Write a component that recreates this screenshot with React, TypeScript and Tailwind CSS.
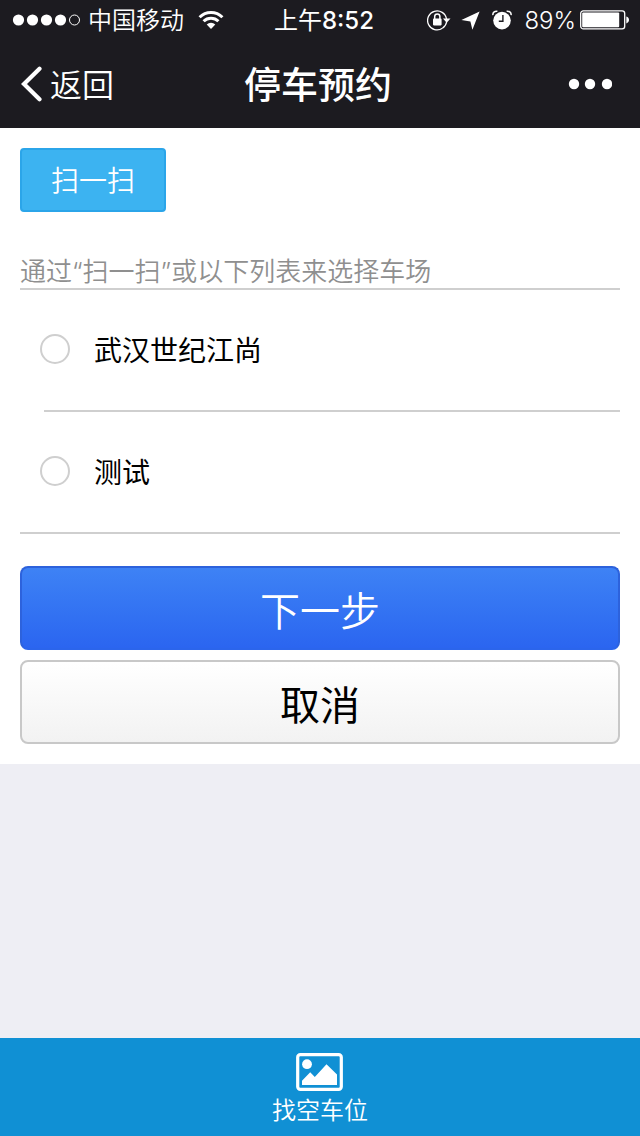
import { useState } from 'react';

interface ParkingLot {
  id: string;
  name: string;
}

const lots: ParkingLot[] = [
  { id: 'jiangshang', name: '武汉世纪江尚' },
  { id: 'test', name: '测试' },
];

function SignalDots() {
  return (
    <svg width="68" height="12" viewBox="0 0 68 12" fill="#fff">
      <circle cx="6.5" cy="6" r="5.6" />
      <circle cx="20.5" cy="6" r="5.6" />
      <circle cx="34.5" cy="6" r="5.6" />
      <circle cx="48.5" cy="6" r="5.6" />
      <circle cx="62.5" cy="6" r="5" fill="none" stroke="#fff" />
    </svg>
  );
}

function WifiIcon() {
  return (
    <svg width="26" height="20" viewBox="0 0 26 20" fill="none" stroke="#fff" strokeWidth="3">
      <path d="M1.6 7.2a16.2 16.2 0 0 1 22.8 0" />
      <path d="M5.6 11.3a10.5 10.5 0 0 1 14.8 0" />
      <path d="M13 19l-4.3-4.6a6.2 6.2 0 0 1 8.6 0z" fill="#fff" stroke="none" />
    </svg>
  );
}

function RotationLockIcon() {
  return (
    <svg width="24" height="22" viewBox="0 0 24 22" fill="none" stroke="#fff">
      <path d="M15.4 19.3A9.5 9.5 0 1 1 19.5 10" strokeWidth="1.3" />
      <path d="M15.9 9.6h7.6l-3.8 4.2z" fill="#fff" stroke="none" />
      <path d="M19.6 13a9.5 9.5 0 0 1-4.2 6.3" strokeWidth="1.3" />
      <rect x="6" y="9.6" width="8.6" height="6.8" rx="0.8" fill="#fff" stroke="none" />
      <path d="M7.7 10V7.6a2.6 2.6 0 0 1 5.2 0V10" strokeWidth="1.5" />
    </svg>
  );
}

function LocationIcon() {
  return (
    <svg width="19" height="19" viewBox="0 0 19 19" fill="#fff">
      <path d="M18.6 0.4L11.4 18.8 9.4 10.4 0.4 9z" />
    </svg>
  );
}

function AlarmIcon() {
  return (
    <svg width="20" height="20" viewBox="0 0 20 20" fill="none" stroke="#fff">
      <circle cx="10" cy="10.6" r="8.8" fill="#fff" stroke="none" />
      <path d="M0.9 5.2C0.6 2.6 2.4 1 5.4 1.3M19.1 5.2C19.4 2.6 17.6 1 14.6 1.3" strokeWidth="1.5" />
      <path d="M10.9 5v6.2H6.8" stroke="#1c1b20" strokeWidth="1.4" />
    </svg>
  );
}

function BatteryIcon() {
  return (
    <svg width="50" height="20" viewBox="0 0 50 20" fill="#fff">
      <rect x="0.7" y="0.9" width="44" height="18" rx="2.6" fill="none" stroke="#fff" strokeWidth="1.3" />
      <rect x="2.2" y="2.6" width="37" height="14.6" rx="1" />
      <path d="M46.3 6.6c3.6 1 3.6 5.8 0 6.8z" />
    </svg>
  );
}

function PictureIcon() {
  return (
    <svg width="48" height="38" viewBox="0 0 48 38" fill="#fff">
      <rect x="1.7" y="1.7" width="43.6" height="34.6" rx="2.6" fill="none" stroke="#fff" strokeWidth="3.2" />
      <circle cx="11" cy="11.2" r="4.9" />
      <path d="M6 32V27.8L14.2 19.2 18.8 24 30.5 11.2 41 21.6V32z" />
    </svg>
  );
}

function StatusBar() {
  return (
    <div className="grid h-10 grid-cols-[1fr_auto_1fr] items-center pr-2.5 pl-3 text-2xl">
      <div className="flex items-center gap-2">
        <SignalDots />
        <span className="pt-0.5 font-[350]">中国移动</span>
        <span className="ml-1.5"><WifiIcon /></span>
      </div>
      <time className="pt-0.5 pl-1.5">
        上午<span className="font-medium">8:52</span>
      </time>
      <div className="flex items-center justify-end gap-3">
        <span className="flex items-center gap-2.5">
          <RotationLockIcon />
          <LocationIcon />
        </span>
        <AlarmIcon />
        <span className="flex items-center gap-1 font-light">
          <span className="pt-0.5">89%</span>
          <BatteryIcon />
        </span>
      </div>
    </div>
  );
}

export default function App() {
  const [selected, setSelected] = useState<string | null>(null);

  return (
    <div
      lang="zh-CN"
      className="flex min-h-screen flex-col bg-[#eeeef4] font-['Inter','Noto_Sans_CJK_SC',sans-serif] text-black"
    >
      <header className="bg-[#1c1b20] text-white">
        <StatusBar />
        <nav className="grid h-22 grid-cols-[1fr_auto_1fr] items-center px-5">
          <button type="button" className="flex items-center gap-2 justify-self-start text-[32px] font-[350]">
            <svg width="22" height="36" viewBox="0 0 22 36" fill="none" stroke="#fff" strokeWidth="4.2" strokeLinecap="round">
              <path d="M19.5 2.8L4 18l15.5 15.2" />
            </svg>
            <span className="pt-1">返回</span>
          </button>
          <h1 className="pt-1 pr-1 text-[37px] font-medium">停车预约</h1>
          <button type="button" aria-label="更多" className="mr-2 justify-self-end">
            <svg width="44" height="12" viewBox="0 0 44 12" fill="#fff">
              <circle cx="6" cy="6" r="5.2" />
              <circle cx="22" cy="6" r="5.2" />
              <circle cx="39" cy="6" r="5.2" />
            </svg>
          </button>
        </nav>
      </header>

      <main className="bg-white p-5">
        <button
          type="button"
          className="h-16 rounded border-2 border-[#2ba5e9] bg-[#3cb3f1] px-[29px] pt-0.5 text-[28px] font-[350] text-white"
        >
          扫一扫
        </button>

        <fieldset className="mt-9">
          <legend className="w-full border-b-2 border-[#cfcfcf] pt-2 text-[26px] leading-8 font-[350] text-[#8f8f8f]">
            通过“扫一扫”或以下列表来选择车场
          </legend>
          <div className="border-b-2 border-[#cfcfcf]">
            {lots.map((lot, i) => (
              <div key={lot.id}>
                {i > 0 && <hr className="ml-6 border-t-2 border-[#cfcfcf]" />}
                <label className="flex h-30 items-center gap-6 pb-0.5 pl-5 text-[28px]">
                  <input
                    type="radio"
                    name="lot"
                    value={lot.id}
                    checked={selected === lot.id}
                    onChange={() => setSelected(lot.id)}
                    className="size-[30px] appearance-none rounded-full border-2 border-[#cfcfcf] bg-white checked:border-8 checked:border-[#2f66ee]"
                  />
                  <span className="pt-1">{lot.name}</span>
                </label>
              </div>
            ))}
          </div>
        </fieldset>

        <div className="mt-8 flex flex-col gap-2.5 text-[40px]">
          <button
            type="button"
            className="h-21 rounded-lg border-2 border-[#2d62dc] border-b-[#2b65ec] bg-linear-to-b from-[#3e82f5] to-[#2b65f0] pt-2 font-[350] text-white"
          >
            下一步
          </button>
          <button
            type="button"
            className="h-21 rounded-lg border-2 border-[#c8c8c8] bg-linear-to-b from-white to-[#f2f2f2] pt-2"
          >
            取消
          </button>
        </div>
      </main>

      <footer className="mt-auto bg-[#1090d4] text-white">
        <a href="#spaces" className="flex h-[98px] flex-col items-center gap-1 pt-[15px] text-2xl font-[350]">
          <PictureIcon />
          找空车位
        </a>
      </footer>
    </div>
  );
}
